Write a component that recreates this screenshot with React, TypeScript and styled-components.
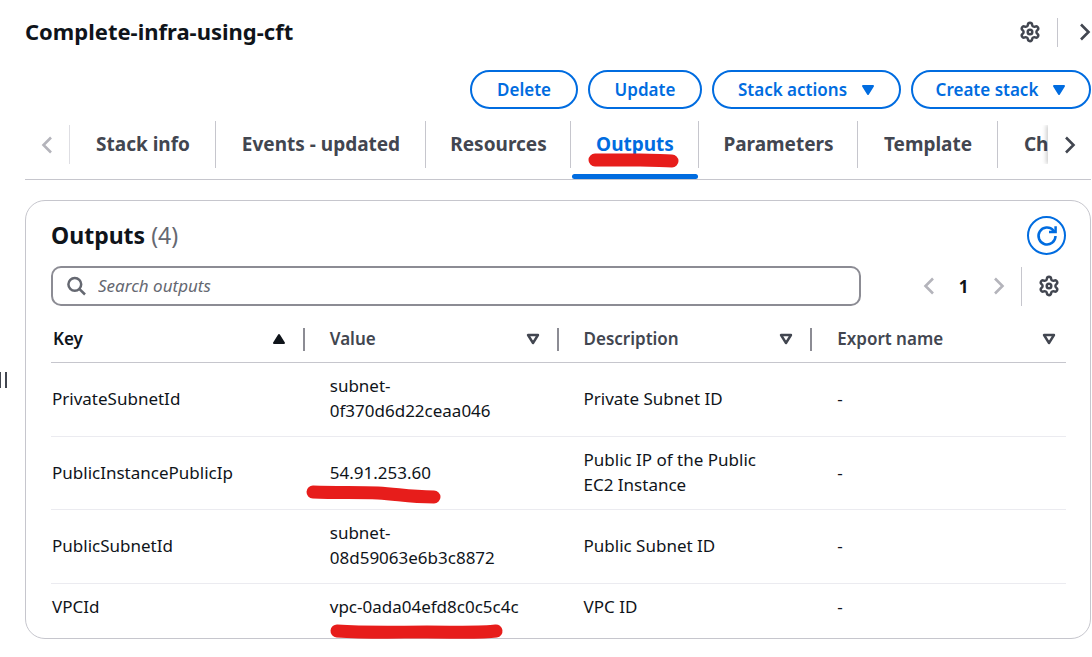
import React from 'react';
import styled, { createGlobalStyle } from 'styled-components';

const GlobalStyle = createGlobalStyle`
  *, *::before, *::after { box-sizing: border-box; }
  body {
    margin: 0;
    background: #fff;
    color: #0f141a;
    font-family: "Noto Sans", "Open Sans", sans-serif;
    font-size: 17px;
    line-height: 25px;
    overflow-x: hidden;
  }
  button, input { font: inherit; color: inherit; }
`;

const blue = '#006ce0';
const grey = '#424650';
const line = '#c6c6cd';
const red = '#e71d1b';

const Page = styled.div`
  display: flex;
  min-height: 100vh;
`;

const Rail = styled.aside`
  flex: none;
  width: 25px;
  padding-top: 372px;
`;

const Grip = styled.button`
  display: flex;
  width: 7px;
  height: 16px;
  padding: 0;
  border: solid ${grey};
  border-width: 0 2px 0 1px;
  background: none;
`;

const Main = styled.main`
  flex: 1;
  min-width: 0;
  padding: 0 1px 18px 0;
`;

const PlainButton = styled.button<{ $muted?: boolean }>`
  display: flex;
  align-items: center;
  justify-content: center;
  padding: 0;
  border: 0;
  background: none;
  color: ${(p) => (p.$muted ? '#b4b4bb' : grey)};
  cursor: pointer;
`;

const TopBar = styled.header`
  display: flex;
  align-items: center;
  height: 64px;
`;

const Title = styled.h1`
  flex: 1;
  margin: 0;
  padding-bottom: 2px;
  font-size: 22px;
  font-weight: 700;
  line-height: 28px;
`;

const TopTools = styled.div`
  display: flex;
  align-items: center;
  gap: 16px;
`;

const Divider = styled.span`
  width: 1px;
  height: 29px;
  margin-right: 5px;
  background: ${line};
`;

const Actions = styled.div`
  display: flex;
  justify-content: flex-end;
  gap: 10px;
  padding: 6px 0 12px;
`;

const ActionButton = styled.button<{ $w: number }>`
  display: flex;
  align-items: center;
  justify-content: center;
  gap: 14px;
  width: ${(p) => p.$w}px;
  height: 39px;
  padding: 0;
  border: 2px solid ${blue};
  border-radius: 20px;
  background: #fff;
  color: ${blue};
  font-size: 17px;
  font-weight: 600;
  white-space: nowrap;
`;

const TabBar = styled.nav`
  display: flex;
  height: 59px;
  border-bottom: 1px solid ${line};
`;

const ScrollLeft = styled(PlainButton)`
  flex: none;
  width: 45px;
  height: 39px;
  margin-top: 4px;
  border-right: 1px solid #dedee3;
`;

const ScrollRight = styled(PlainButton)`
  flex: none;
  position: relative;
  width: 43px;
  height: 39px;
  margin-top: 4px;
  background: #fff;
  box-shadow: -2px 0 4px #00000030;
  clip-path: inset(0 0 0 -8px);
`;

const Tabs = styled.div`
  display: flex;
  flex: 1;
  min-width: 0;
  overflow: hidden;
`;

const Tab = styled.button<{ $w: number; $active?: boolean }>`
  flex: none;
  position: relative;
  display: flex;
  justify-content: center;
  width: ${(p) => p.$w}px;
  height: 58px;
  padding: 11px 0 0;
  border: 0;
  background: none;
  color: ${(p) => (p.$active ? blue : grey)};
  font-size: 19px;
  font-weight: 700;
  white-space: nowrap;

  &::before {
    content: '';
    position: absolute;
    top: 0;
    right: 0;
    width: 1px;
    height: 47px;
    background: ${line};
  }

  &::after {
    content: '';
    position: absolute;
    left: 1px;
    right: 1px;
    bottom: 0;
    height: 5px;
    border-radius: 3px;
    background: ${(p) => (p.$active ? blue : 'transparent')};
  }
`;

const Marker = styled.svg<{ $x: number; $y: number }>`
  position: absolute;
  left: ${(p) => p.$x}px;
  top: ${(p) => p.$y}px;
  overflow: visible;
  pointer-events: none;
`;

const Card = styled.section`
  margin-top: 20px;
  padding: 15px 24px 7px 25px;
  border: 1px solid ${line};
  border-radius: 20px;
`;

const CardHeader = styled.div`
  display: flex;
  align-items: center;
  justify-content: space-between;
`;

const CardTitle = styled.h2`
  margin: 0;
  padding-bottom: 2px;
  font-size: 23px;
  font-weight: 700;
  line-height: 30px;
`;

const Counter = styled.span`
  color: #656871;
  font-weight: 400;
`;

const RoundButton = styled.button`
  display: flex;
  align-items: center;
  justify-content: center;
  width: 39px;
  height: 39px;
  padding: 0;
  border: 2px solid ${blue};
  border-radius: 50%;
  background: #fff;
  color: ${blue};
`;

const Tools = styled.div`
  display: flex;
  align-items: center;
  justify-content: space-between;
  margin-top: 11px;
`;

const SearchBox = styled.label`
  display: flex;
  align-items: center;
  gap: 11px;
  flex: 1;
  max-width: 810px;
  height: 40px;
  padding: 0 14px;
  border: 2px solid #8c8c94;
  border-radius: 10px;
  color: #656871;
`;

const SearchInput = styled.input`
  flex: 1;
  min-width: 0;
  padding: 0 0 2px;
  border: 0;
  outline: 0;
  background: none;
  &::placeholder { color: #656871; font-style: italic; opacity: 1; }
`;

const Pager = styled.div`
  display: flex;
  align-items: center;
`;

const PageButton = styled(PlainButton)`
  width: 35px;
  height: 39px;
  font-weight: 700;
`;

const CurrentPage = styled(PageButton)`
  color: #0f141a;
`;

const Preferences = styled(PlainButton)`
  width: 45px;
  height: 39px;
  margin-left: 5px;
  padding-left: 10px;
  border-left: 1px solid ${line};
`;

const Table = styled.table`
  width: 100%;
  margin-top: 11px;
  table-layout: fixed;
  border-collapse: separate;
  border-spacing: 0;
`;

const HeadCell = styled.th<{ $sorted?: boolean }>`
  height: 46px;
  padding: 0;
  border-bottom: 1px solid ${line};
  color: ${(p) => (p.$sorted ? '#0f141a' : grey)};
  text-align: left;
  font-weight: 600;
`;

const HeadInner = styled.div`
  display: flex;
  align-items: center;
  justify-content: space-between;
  height: 23px;
  padding: 0 17px 2px 25px;
  border-right: 2px solid #8c8c94;

  th:first-child & { padding-left: 2px; }
  th:last-child & { padding-right: 10px; border-right: 0; }
`;

const Row = styled.tr`
  td {
    padding: 10px 32px 13px 25px;
    border-bottom: 1px solid #ebebf0;
    vertical-align: middle;
  }
  td:first-child { padding-left: 1px; }
  &:nth-child(even) td { padding-bottom: 12px; }
  &:last-child td { border-bottom: 0; }
`;

const Mark = styled.span`
  position: relative;
  display: inline-block;
`;

function Gear() {
  return (
    <svg width="22" height="22" viewBox="0 0 24 24" fill="none" stroke="currentColor" strokeWidth="2.7" strokeLinejoin="round" aria-hidden="true">
      <path d="M9.671 4.136a2.34 2.34 0 0 1 4.659 0 2.34 2.34 0 0 0 3.319 1.915 2.34 2.34 0 0 1 2.33 4.033 2.34 2.34 0 0 0 0 3.831 2.34 2.34 0 0 1-2.33 4.033 2.34 2.34 0 0 0-3.319 1.915 2.34 2.34 0 0 1-4.659 0 2.34 2.34 0 0 0-3.32-1.915 2.34 2.34 0 0 1-2.33-4.033 2.34 2.34 0 0 0 0-3.831A2.34 2.34 0 0 1 6.35 6.051a2.34 2.34 0 0 0 3.319-1.915" />
      <circle cx="12" cy="12" r="2.5" />
    </svg>
  );
}

function Chevron({ left }: { left?: boolean }) {
  return (
    <svg width="12" height="18" viewBox="0 0 12 18" fill="none" stroke="currentColor" strokeWidth="2.6" aria-hidden="true">
      <path d={left ? 'M10 1.5 2.5 9l7.5 7.5' : 'M2 1.5 9.5 9 2 16.5'} />
    </svg>
  );
}

function Triangle({ up, hollow }: { up?: boolean; hollow?: boolean }) {
  return (
    <svg width="14" height="12" viewBox="0 0 14 12" fill={hollow ? 'none' : 'currentColor'} stroke="currentColor" strokeWidth={hollow ? 2.4 : 2} strokeLinejoin="round" aria-hidden="true">
      <path d={up ? 'M7 2 12 10H2Z' : 'M2 2H12L7 10Z'} />
    </svg>
  );
}

function Stroke({ d, x, y }: { d: string; x: number; y: number }) {
  return (
    <Marker $x={x} $y={y} width="1" height="1" fill="none" stroke={red} strokeWidth="13" strokeLinecap="round" strokeLinejoin="round" aria-hidden="true">
      <path d={d} />
    </Marker>
  );
}

const tabs = [
  { label: 'Stack info', w: 146 },
  { label: 'Events - updated', w: 210 },
  { label: 'Resources', w: 145 },
  { label: 'Outputs', w: 128, active: true },
  { label: 'Parameters', w: 159 },
  { label: 'Template', w: 140 },
  { label: 'Change sets', w: 167 },
];

const rows = [
  { key: 'PrivateSubnetId', value: 'subnet-0f370d6d22ceaa046', description: 'Private Subnet ID' },
  {
    key: 'PublicInstancePublicIp',
    value: '54.91.253.60',
    description: 'Public IP of the Public EC2 Instance',
    stroke: { d: 'M0 0C25 1 45 0 65 1S95 5 121 5', x: -17, y: 32 },
  },
  { key: 'PublicSubnetId', value: 'subnet-08d59063e6b3c8872', description: 'Public Subnet ID' },
  {
    key: 'VPCId',
    value: 'vpc-0ada04efd8c0c5c4c',
    description: 'VPC ID',
    stroke: { d: 'M0 0C30 2 60 1 90 1S145 2 159 0', x: 7, y: 37 },
  },
];

export default function App() {
  return (
    <>
      <GlobalStyle />
      <Page>
        <Rail>
          <Grip aria-label="Resize panel" />
        </Rail>
        <Main>
          <TopBar>
            <Title>Complete-infra-using-cft</Title>
            <TopTools>
              <PlainButton aria-label="Settings"><Gear /></PlainButton>
              <Divider />
              <PlainButton aria-label="Next"><Chevron /></PlainButton>
            </TopTools>
          </TopBar>
          <Actions>
            <ActionButton $w={108}>Delete</ActionButton>
            <ActionButton $w={114}>Update</ActionButton>
            <ActionButton $w={189}>Stack actions <Triangle /></ActionButton>
            <ActionButton $w={180}>Create stack <Triangle /></ActionButton>
          </Actions>
          <TabBar>
            <ScrollLeft $muted aria-label="Scroll left"><Chevron left /></ScrollLeft>
            <Tabs role="tablist">
              {tabs.map((t) => (
                <Tab key={t.label} $w={t.w} $active={t.active} role="tab" aria-selected={!!t.active}>
                  {t.label}
                  {t.active && <Stroke d="M0 0H45C62 0 66 1 77 1" x={24} y={39} />}
                </Tab>
              ))}
            </Tabs>
            <ScrollRight aria-label="Scroll right"><Chevron /></ScrollRight>
          </TabBar>
          <Card>
            <CardHeader>
              <CardTitle>Outputs <Counter>(4)</Counter></CardTitle>
              <RoundButton aria-label="Refresh">
                <svg width="22" height="22" viewBox="0 0 22 22" fill="none" stroke="currentColor" strokeWidth="2.5" aria-hidden="true">
                  <path d="M19.5 11A8.5 8.5 0 1 1 17.3 5.3L19 7" />
                  <path d="M19.6 1.2V7H13" />
                </svg>
              </RoundButton>
            </CardHeader>
            <Tools>
              <SearchBox>
                <svg width="20" height="20" viewBox="0 0 20 20" fill="none" stroke="currentColor" strokeWidth="2.5" aria-hidden="true">
                  <circle cx="7.8" cy="8.3" r="6.4" />
                  <path d="M12.3 12.8 18 18.5" />
                </svg>
                <SearchInput type="text" placeholder="Search outputs" aria-label="Search outputs" />
              </SearchBox>
              <Pager>
                <PageButton $muted aria-label="Previous page"><Chevron left /></PageButton>
                <CurrentPage>1</CurrentPage>
                <PageButton $muted aria-label="Next page"><Chevron /></PageButton>
                <Preferences aria-label="Preferences"><Gear /></Preferences>
              </Pager>
            </Tools>
            <Table>
              <thead>
                <tr>
                  <HeadCell $sorted><HeadInner>Key <Triangle up /></HeadInner></HeadCell>
                  <HeadCell><HeadInner>Value <Triangle hollow /></HeadInner></HeadCell>
                  <HeadCell><HeadInner>Description <Triangle hollow /></HeadInner></HeadCell>
                  <HeadCell><HeadInner>Export name <Triangle hollow /></HeadInner></HeadCell>
                </tr>
              </thead>
              <tbody>
                {rows.map((r) => (
                  <Row key={r.key}>
                    <td>{r.key}</td>
                    <td>
                      <Mark>
                        {r.value}
                        {r.stroke && <Stroke {...r.stroke} />}
                      </Mark>
                    </td>
                    <td>{r.description}</td>
                    <td>-</td>
                  </Row>
                ))}
              </tbody>
            </Table>
          </Card>
        </Main>
      </Page>
    </>
  );
}
